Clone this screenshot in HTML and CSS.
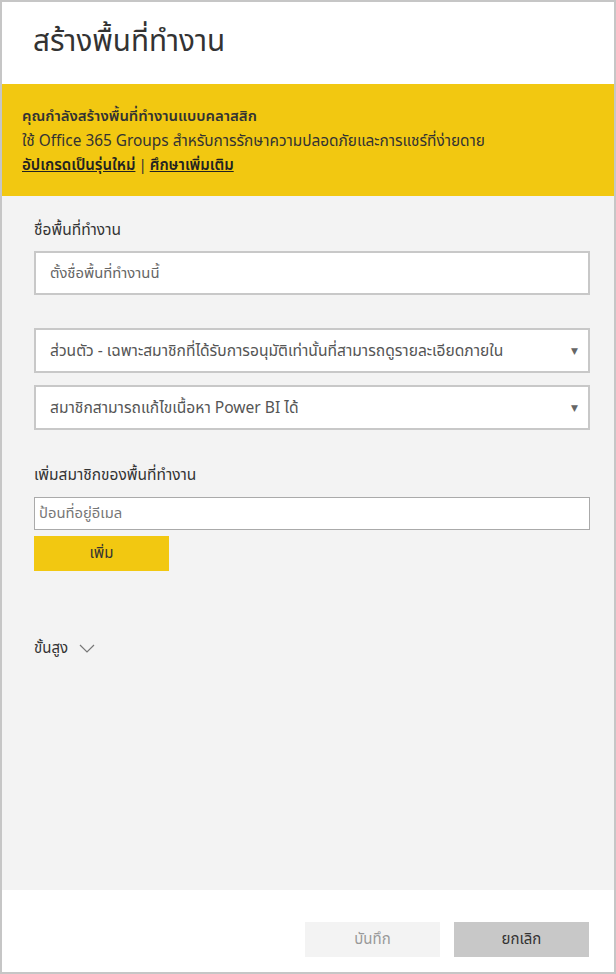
FILE: index.html
```html
<!DOCTYPE html>
<html lang="th">
<head>
<meta charset="utf-8">
<link rel="stylesheet" href="styles.css">
</head>
<body>
<div class="dialog">
  <header class="header">
    <h1 class="title">สร้างพื้นที่ทำงาน</h1>
  </header>
  <section class="banner">
    <div class="banner-line banner-strong">คุณกำลังสร้างพื้นที่ทำงานแบบคลาสสิก</div>
    <div class="banner-line banner-main">ใช้ Office 365 Groups สำหรับการรักษาความปลอดภัยและการแชร์ที่ง่ายดาย</div>
    <div class="banner-line banner-links"><a class="link" href="#">อัปเกรดเป็นรุ่นใหม่</a><span class="sep">|</span><a class="link" href="#">ศึกษาเพิ่มเติม</a></div>
  </section>
  <main class="body">
    <div class="label label-first">ชื่อพื้นที่ทำงาน</div>
    <div class="field field-name">ตั้งชื่อพื้นที่ทำงานนี้</div>
    <div class="select select-first"><span>ส่วนตัว - เฉพาะสมาชิกที่ได้รับการอนุมัติเท่านั้นที่สามารถดูรายละเอียดภายใน</span><span class="arrow">▼</span></div>
    <div class="select"><span>สมาชิกสามารถแก้ไขเนื้อหา Power BI ได้</span><span class="arrow">▼</span></div>
    <div class="label label-members">เพิ่มสมาชิกของพื้นที่ทำงาน</div>
    <div class="field field-email">ป้อนที่อยู่อีเมล</div>
    <button class="btn-add">เพิ่ม</button>
    <div class="advanced">
      <span>ขั้นสูง</span>
      <svg class="chev" width="16" height="9" viewBox="0 0 16 9"><path d="M1 1 L8 8 L15 1" fill="none" stroke="#777" stroke-width="1.2"/></svg>
    </div>
  </main>
  <footer class="footer">
    <button class="btn btn-save">บันทึก</button>
    <button class="btn btn-cancel">ยกเลิก</button>
  </footer>
</div>
</body>
</html>
```

FILE: styles.css
```css
* { box-sizing: border-box; }
html, body { margin: 0; padding: 0; }
body {
  font-family: "Segoe UI", "Leelawadee UI", "Noto Sans Thai", "Noto Sans", "DejaVu Sans", sans-serif;
  color: #333;
  background: #fff;
}
.dialog {
  width: 616px;
  height: 974px;
  border: 2px solid #c6c6c6;
  display: flex;
  flex-direction: column;
  background: #fff;
}
.header {
  height: 82px;
  padding: 0 0 0 31px;
  display: flex;
  align-items: center;
}
.title {
  margin: 0;
  font-weight: 400;
  font-size: 29.6px;
  color: #333;
  line-height: 1;
  padding-bottom: 1px;
}
.banner {
  height: 112px;
  background: #f2c811;
  padding: 21px 20px 0 20px;
  font-size: 14px;
  color: #333;
}
.banner-line { height: 24.5px; line-height: 24.5px; white-space: nowrap; }
.banner-strong { font-size: 14.9px; font-weight: 600; }
.banner-main { font-size: 15.4px; }
.banner-links { font-size: 15px; font-weight: 600; }
.link { color: #222; text-decoration: underline; }
.sep { margin: 0 3px; font-weight: 400; }
.body {
  flex: 1;
  background: #f3f3f3;
  padding: 0 24px 0 32px;
  display: flex;
  flex-direction: column;
  align-items: flex-start;
}
.label { font-size: 15.5px; color: #333; line-height: 20px; }
.label-first { margin-top: 25px; }
.field {
  width: 556px;
  background: #fff;
  color: #666;
  font-size: 14.8px;
  display: flex;
  align-items: center;
}
.field-name {
  margin-top: 10px;
  height: 44px;
  border: 2px solid #c8c8c8;
  padding-left: 14px;
}
.select {
  width: 556px;
  height: 45px;
  background: #fff;
  border: 2px solid #c8c8c8;
  display: flex;
  align-items: center;
  justify-content: space-between;
  padding: 0 10px 0 14px;
  font-size: 15.6px;
  color: #555;
  margin-top: 12px;
}
.select-first { margin-top: 33px; }
.arrow { font-size: 9px; color: #666; }
.label-members { margin-top: 36px; }
.field-email {
  margin-top: 11px;
  height: 33px;
  border: 1px solid #aaa;
  padding-left: 4px;
  color: #777;
}
.btn-add {
  margin-top: 6px;
  width: 135px;
  height: 35px;
  border: 0;
  background: #f2c811;
  font-family: inherit;
  font-size: 15px;
  color: #333;
}
.advanced {
  margin-top: 66px;
  display: flex;
  align-items: center;
  gap: 11px;
  font-size: 15px;
  color: #333;
}
.chev { display: block; }
.footer {
  height: 82px;
  background: #fff;
  display: flex;
  justify-content: flex-end;
  align-items: flex-start;
  padding: 32px 25px 0 0;
  gap: 14px;
}
.btn {
  width: 135px;
  height: 35px;
  border: 0;
  font-family: inherit;
  font-size: 15px;
}
.btn-save { background: #f3f3f3; color: #999; }
.btn-cancel { background: #c8c8c8; color: #333; }
```
